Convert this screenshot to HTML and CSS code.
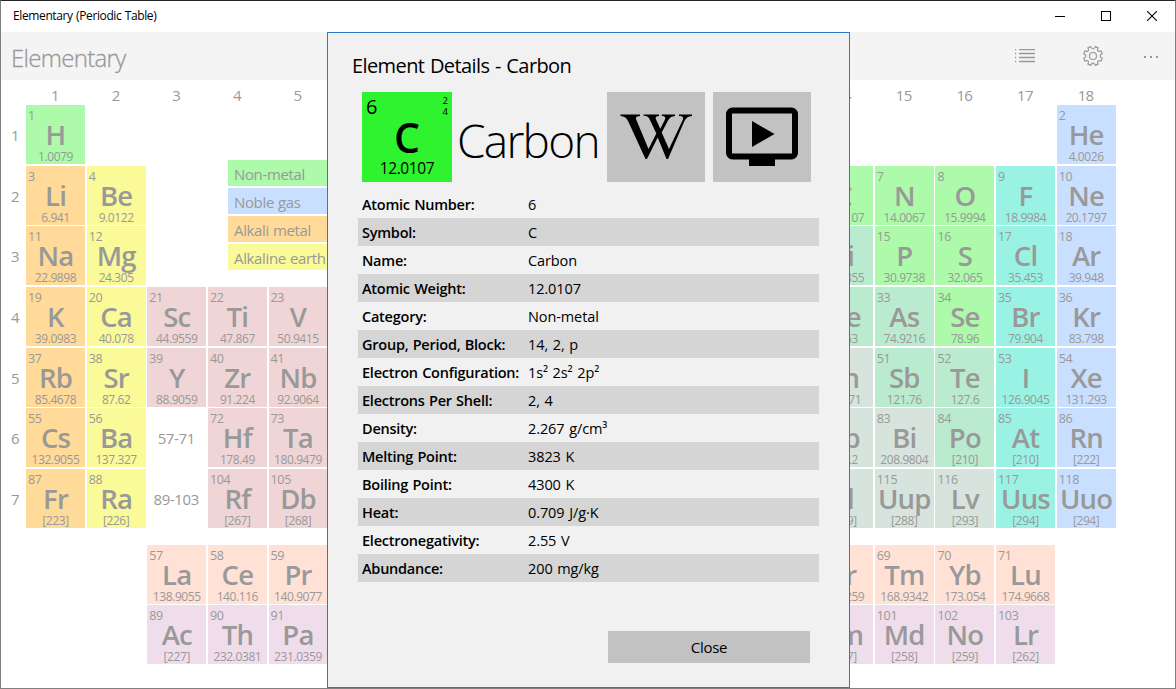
FILE: index.html
```html
<!DOCTYPE html>
<html lang="en">
<head>
<meta charset="utf-8">
<title>Elementary (Periodic Table)</title>
<link rel="stylesheet" href="styles.css">
</head>
<body>
<div class="window">
  <header class="titlebar">
    <span class="app-name">Elementary (Periodic Table)</span>
    <div class="controls">
      <svg width="10" height="10" viewBox="0 0 10 10"><path d="M0 5.5H10" stroke="#000" fill="none"/></svg>
      <svg width="10" height="10" viewBox="0 0 10 10"><rect x=".5" y=".5" width="9" height="9" stroke="#000" fill="none"/></svg>
      <svg width="10" height="10" viewBox="0 0 10 10"><path d="M0 0L10 10M10 0L0 10" stroke="#000" stroke-width="1.1" fill="none"/></svg>
    </div>
  </header>
  <nav class="appbar">
    <h1 class="page-title">Elementary</h1>
    <div class="commands">
      <svg class="cmd-list" width="20" height="14" viewBox="0 0 20 14"><path d="M0 .5H1.200M0 4.500H1.200M0 8.500H1.200M0 12.500H1.200M4 .5H20M4 4.500H20M4 8.500H20M4 12.500H20" stroke="#999" stroke-width="1.300" fill="none"/></svg>
      <svg class="cmd-gear" width="20" height="20" viewBox="0 0 20 20" fill="none" stroke="#999" stroke-width="1.200" stroke-linejoin="round"><circle cx="10" cy="10" r="3.500"/><path id="gear" d=""/></svg>
      <svg class="cmd-more" width="14" height="2" viewBox="0 0 14 2"><path d="M0 0h2v2H0zM6 0h2v2H6zM12 0h2v2h-2z" fill="#999"/></svg>
    </div>
  </nav>
  <main class="table" id="table"></main>
  <ul class="legend">
    <li class="nonmetal">Non-metal</li>
    <li class="noble">Noble gas</li>
    <li class="alkali">Alkali metal</li>
    <li class="earth">Alkaline earth</li>
  </ul>
</div>
<section class="dialog" role="dialog">
  <h2 class="dialog-title">Element Details - Carbon</h2>
  <div class="hero">
    <div class="tile">
      <span class="tile-number">6</span>
      <span class="tile-shells">2<br>4</span>
      <span class="tile-symbol">C</span>
      <span class="tile-mass">12.0107</span>
    </div>
    <div class="hero-name">Carbon</div>
    <button class="square" aria-label="Wikipedia">
      <svg width="98" height="90" viewBox="0 0 98 90"><path d="M13.500 22.500H33v1.400c-4 .2-4.700 1.600-3.500 4.300L41.500 57 49.300 41.500 43 28c-1.500-3.200-3-4-6.500-4.200v-1.300H52v1.400c-3.300.2-4 1.500-2.700 4.200l4 8.700 4.200-8.300c1.600-3.200.8-4.400-2.700-4.600v-1.400H68v1.400c-3.500.3-5.300 1.500-7 4.700l-6.300 12L62 57l13.500-28.500c1.500-3.200.5-4.400-3.500-4.600v-1.400h13v1.400c-4 .3-6 2-8 6L61 67h-1.500L50.700 45.500 40 67h-1.500L21.500 30c-2-4.300-4-5.900-8-6.100z" fill="#000"/></svg>
    </button>
    <button class="square" aria-label="Video">
      <svg width="98" height="90" viewBox="0 0 98 90"><rect x="16" y="18.500" width="66" height="46" rx="3.500" fill="none" stroke="#000" stroke-width="6"/><path d="M36 66h26v8H36zM39 29v26l22.500-13z" fill="#000"/></svg>
    </button>
  </div>
  <dl class="facts">
    <div><dt>Atomic Number:</dt><dd>6</dd></div>
    <div><dt>Symbol:</dt><dd>C</dd></div>
    <div><dt>Name:</dt><dd>Carbon</dd></div>
    <div><dt>Atomic Weight:</dt><dd>12.0107</dd></div>
    <div><dt>Category:</dt><dd>Non-metal</dd></div>
    <div><dt>Group, Period, Block:</dt><dd>14, 2, p</dd></div>
    <div><dt>Electron Configuration:</dt><dd>1s² 2s² 2p²</dd></div>
    <div><dt>Electrons Per Shell:</dt><dd>2, 4</dd></div>
    <div><dt>Density:</dt><dd>2.267 g/cm³</dd></div>
    <div><dt>Melting Point:</dt><dd>3823 K</dd></div>
    <div><dt>Boiling Point:</dt><dd>4300 K</dd></div>
    <div><dt>Heat:</dt><dd>0.709 J/g·K</dd></div>
    <div><dt>Electronegativity:</dt><dd>2.55 V</dd></div>
    <div><dt>Abundance:</dt><dd>200 mg/kg</dd></div>
  </dl>
  <button class="close">Close</button>
</section>
<script src="table.js"></script>
</body>
</html>
```
FILE: styles.css
```css
* { box-sizing: border-box; }
body {
  margin: 0;
  width: 1176px;
  height: 689px;
  overflow: hidden;
  font-family: "Open Sans", "Noto Sans", sans-serif;
  color: #999;
}
h1, h2, dl, dd, ul { margin: 0; padding: 0; font-weight: 400; }
button { border: 0; padding: 0; font: inherit; background: #c2c2c2; color: #000; }

.window {
  position: relative;
  height: 689px;
  background: #fff;
  border: 1px solid #808080;
  border-top-color: #262326;
}
.titlebar {
  height: 31px;
  display: flex;
  justify-content: space-between;
  padding: 0 18px 0 12px;
  color: #000;
}
.app-name { font-size: 12px; line-height: 30px; letter-spacing: -.38px; word-spacing: .6px; }
.controls { display: flex; gap: 36px; padding-top: 10px; }
.appbar {
  height: 48px;
  background: #f4f4f4;
  display: flex;
  justify-content: space-between;
  padding: 0 17px 0 10px;
}
.page-title { font-size: 24px; font-weight: 300; line-height: 51px; letter-spacing: -.7px; -webkit-text-stroke: .3px; }
.commands { display: flex; align-items: flex-start; }
.cmd-list { margin: 17px 48px 0 0; }
.cmd-gear { margin: 14px 41px 0 0; }
.cmd-more { margin-top: 24px; }

.table {
  display: grid;
  grid-template-columns: 17px repeat(18, 60.63px);
  grid-template-rows: 25px repeat(7, 60.63px) 15.190px repeat(2, 60.63px);
  padding-left: 8px;
}
.col-head { width: 58px; text-align: center; font-size: 15px; line-height: 30px; letter-spacing: -.6px; }
.row-head, .range { font-size: 15px; line-height: 60px; letter-spacing: -.4px; }
.row-head { padding-left: 2px; }
.range { width: 58px; text-align: center; }
.col-head, .row-head, .range { font-weight: 400; }
.cell {
  width: 59px;
  height: 59px;
  padding: 2px 0 0 2px;
  display: flex;
  flex-direction: column;
  overflow: hidden;
  white-space: nowrap;
}
.number { font-size: 12.500px; line-height: 17px; letter-spacing: -.3px; }
.symbol { font-size: 27.500px; font-weight: 600; line-height: 22px; margin-left: -2px; text-align: center; letter-spacing: -.8px; }
.mass { font-size: 12px; line-height: 16px; margin: 3px 0 0 -2px; text-align: center; letter-spacing: -.42px; }

.nonmetal { background: #acfaaa; }
.noble { background: #c9dfff; }
.alkali { background: #ffda99; }
.earth { background: #fafa99; }
.transition { background: #efd5d5; }
.metalloid { background: #baebcf; }
.poor { background: #d6e4dd; }
.halogen { background: #99f2e3; }
.lanthanide { background: #ffe1d6; }
.actinide { background: #f0ddeb; }

.legend {
  position: absolute;
  left: 227px;
  top: 159px;
  width: 140px;
  display: grid;
  gap: 2px;
  list-style: none;
}
.legend li { height: 26px; padding-left: 6px; font-size: 15px; line-height: 29px; letter-spacing: -.35px; word-spacing: .5px; }

.dialog {
  position: absolute;
  left: 327px;
  top: 32px;
  width: 523px;
  height: 656px;
  padding: 0 30px 0 24px;
  border: 1px solid #2a7bc4;
  background: #f1f1f1;
  color: #000;
}
.dialog-title { font-size: 20px; line-height: 26px; margin: 20px 0 13px; letter-spacing: -.6px; word-spacing: 1px; }
.hero { display: flex; height: 90px; margin-left: 10px; }
.tile {
  width: 90px;
  background: #2ef32e;
  display: grid;
  grid-template: 29px 36px 25px / 1fr 1fr;
}
.tile-number { font-size: 20px; line-height: 30px; padding-left: 4px; }
.tile-shells { font-size: 9.500px; line-height: 11px; padding: 3px 4px 0 0; text-align: right; }
.tile-symbol { grid-column: 1 / 3; text-align: center; font-size: 41px; font-weight: 600; line-height: 32px; }
.tile-mass { grid-column: 1 / 3; text-align: center; font-size: 15.500px; line-height: 23px; letter-spacing: -.4px; }
.hero-name { width: 155px; padding-left: 5px; font-size: 46px; font-weight: 300; line-height: 96px; letter-spacing: -1.750px; }
.square { width: 98px; flex: none; }
.square + .square { margin-left: 8px; }
.square svg { display: block; }
.facts { margin: 8px 0 0 6px; font-size: 14.500px; }
.facts div { display: flex; height: 28px; line-height: 29px; padding-left: 4px; white-space: nowrap; }
.facts div:nth-child(even) { background: #d5d5d5; }
.facts dt { width: 166px; font-weight: 600; letter-spacing: -.24px; word-spacing: .8px; }
.facts dd { letter-spacing: -.1px; word-spacing: 1px; }
.close { display: block; width: 202px; height: 32px; margin: 49px 0 0 256px; font-size: 15px; letter-spacing: -.3px; }
```
FILE: table.js
```js
// group, row, number, symbol, weight, category
const elements = `
1 1 1 H 1.0079 nonmetal
18 1 2 He 4.0026 noble
1 2 3 Li 6.941 alkali
2 2 4 Be 9.0122 earth
14 2 6 C 12.0107 nonmetal
15 2 7 N 14.0067 nonmetal
16 2 8 O 15.9994 nonmetal
17 2 9 F 18.9984 halogen
18 2 10 Ne 20.1797 noble
1 3 11 Na 22.9898 alkali
2 3 12 Mg 24.305 earth
14 3 14 Si 28.0855 metalloid
15 3 15 P 30.9738 nonmetal
16 3 16 S 32.065 nonmetal
17 3 17 Cl 35.453 halogen
18 3 18 Ar 39.948 noble
1 4 19 K 39.0983 alkali
2 4 20 Ca 40.078 earth
3 4 21 Sc 44.9559 transition
4 4 22 Ti 47.867 transition
5 4 23 V 50.9415 transition
14 4 32 Ge 72.63 metalloid
15 4 33 As 74.9216 metalloid
16 4 34 Se 78.96 nonmetal
17 4 35 Br 79.904 halogen
18 4 36 Kr 83.798 noble
1 5 37 Rb 85.4678 alkali
2 5 38 Sr 87.62 earth
3 5 39 Y 88.9059 transition
4 5 40 Zr 91.224 transition
5 5 41 Nb 92.9064 transition
14 5 50 Sn 118.71 poor
15 5 51 Sb 121.76 metalloid
16 5 52 Te 127.6 metalloid
17 5 53 I 126.9045 halogen
18 5 54 Xe 131.293 noble
1 6 55 Cs 132.9055 alkali
2 6 56 Ba 137.327 earth
4 6 72 Hf 178.49 transition
5 6 73 Ta 180.9479 transition
14 6 82 Pb 207.2 poor
15 6 83 Bi 208.9804 poor
16 6 84 Po [210] metalloid
17 6 85 At [210] halogen
18 6 86 Rn [222] noble
1 7 87 Fr [223] alkali
2 7 88 Ra [226] earth
4 7 104 Rf [267] transition
5 7 105 Db [268] transition
14 7 114 Fl [289] poor
15 7 115 Uup [288] poor
16 7 116 Lv [293] poor
17 7 117 Uus [294] halogen
18 7 118 Uuo [294] noble
3 9 57 La 138.9055 lanthanide
4 9 58 Ce 140.116 lanthanide
5 9 59 Pr 140.9077 lanthanide
14 9 68 Er 167.259 lanthanide
15 9 69 Tm 168.9342 lanthanide
16 9 70 Yb 173.054 lanthanide
17 9 71 Lu 174.9668 lanthanide
3 10 89 Ac [227] actinide
4 10 90 Th 232.0381 actinide
5 10 91 Pa 231.0359 actinide
14 10 100 Fm [257] actinide
15 10 101 Md [258] actinide
16 10 102 No [259] actinide
17 10 103 Lr [262] actinide`.trim().split("\n").map(line => line.split(" "));

const table = document.getElementById("table");
function place(className, group, row, html) {
  const node = document.createElement("div");
  node.className = className;
  node.style.gridArea = `${row + 1} / ${group + 1}`;
  node.innerHTML = html;
  table.append(node);
}
for (const group of [1, 2, 3, 4, 5, 14, 15, 16, 17, 18]) place("col-head", group, 0, group);
for (let period = 1; period <= 7; period++) place("row-head", 0, period, period);
place("range", 3, 6, "57-71");
place("range", 3, 7, "89-103");
for (const [group, row, number, symbol, mass, category] of elements) {
  place(`cell ${category}`, +group, +row,
    `<span class="number">${number}</span><span class="symbol">${symbol}</span><span class="mass">${mass}</span>`);
}

// Eight-toothed gear outline with rounded valleys
const polar = (angle, radius) =>
  `${(10 + radius * Math.cos(angle)).toFixed(2)} ${(10 + radius * Math.sin(angle)).toFixed(2)}`;
let d = "";
for (let tooth = 0; tooth < 8; tooth++) {
  const angle = (tooth + .5) * Math.PI / 4;
  d += `${tooth ? "L" : "M"}${polar(angle - .17, 9.6)}L${polar(angle + .17, 9.6)}L${polar(angle + .19, 8.4)}`;
  d += `Q${polar(angle + Math.PI / 8, 5.9)} ${polar(angle + Math.PI / 4 - .19, 8.4)}`;
}
document.getElementById("gear").setAttribute("d", d + "Z");
```
